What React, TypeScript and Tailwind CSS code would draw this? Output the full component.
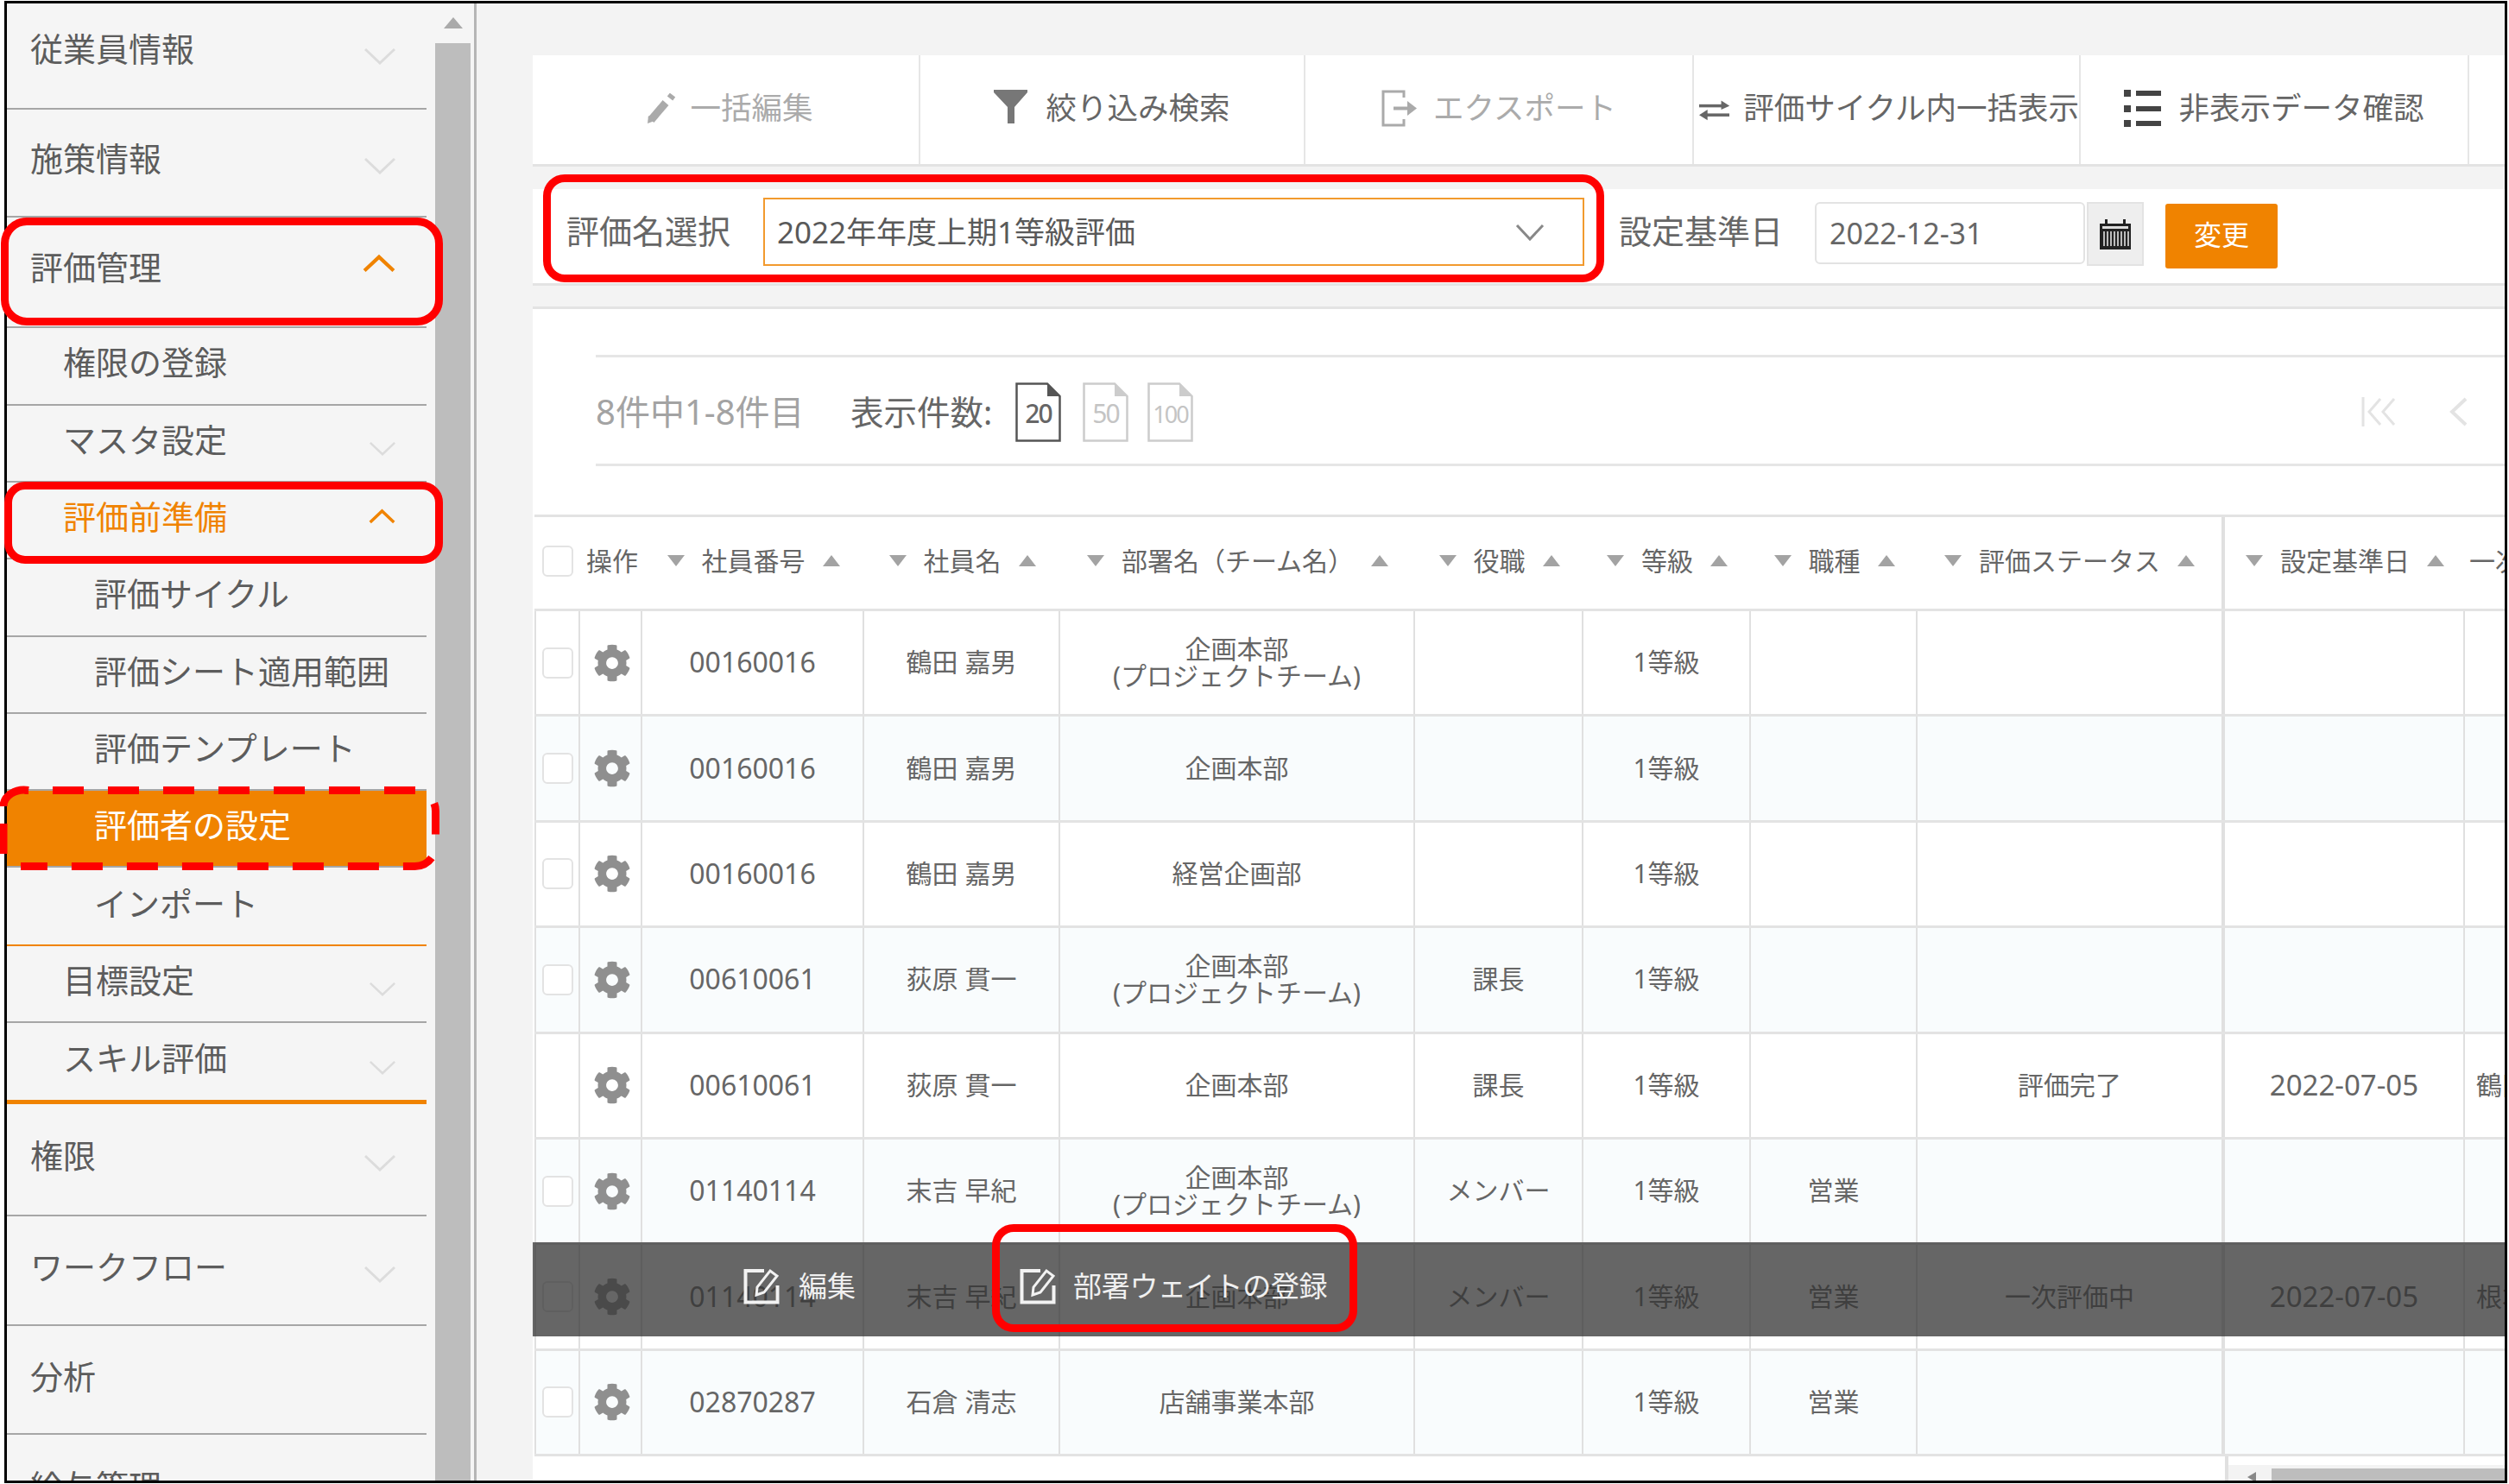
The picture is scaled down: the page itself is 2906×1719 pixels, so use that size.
import { FaCog } from 'react-icons/fa'

type NavItem = {
  label: string
  height: string
  indent: string
  chevron?: 'down' | 'up'
  level: 1 | 2 | 3
  pad?: string
  active?: boolean
  orange?: boolean
  border?: string
}

const navItems: NavItem[] = [
  { label: '従業員情報', height: 'h-[123px]', indent: 'pl-[27px]', chevron: 'down', level: 1, pad: 'pb-[18px]' },
  { label: '施策情報', height: 'h-[125px]', indent: 'pl-[27px]', chevron: 'down', level: 1, pad: 'pb-[12px]' },
  { label: '評価管理', height: 'h-[128px]', indent: 'pl-[27px]', chevron: 'up', level: 1, pad: 'pb-[12px]' },
  { label: '権限の登録', height: 'h-[90px]', indent: 'pl-[65px]', level: 2 },
  { label: 'マスタ設定', height: 'h-[89px]', indent: 'pl-[65px]', chevron: 'down', level: 2 },
  { label: '評価前準備', height: 'h-[89px]', indent: 'pl-[65px]', chevron: 'up', level: 2, orange: true },
  { label: '評価サイクル', height: 'h-[90px]', indent: 'pl-[101px]', level: 3 },
  { label: '評価シート適用範囲', height: 'h-[89px]', indent: 'pl-[101px]', level: 3 },
  { label: '評価テンプレート', height: 'h-[89px]', indent: 'pl-[101px]', level: 3 },
  { label: '評価者の設定', height: 'h-[89px]', indent: 'pl-[101px]', level: 3, active: true },
  { label: 'インポート', height: 'h-[91px]', indent: 'pl-[101px]', level: 3, pad: 'pb-[8px]', border: 'border-b-[2px] border-[#f08300]' },
  { label: '目標設定', height: 'h-[89px]', indent: 'pl-[65px]', chevron: 'down', level: 2 },
  { label: 'スキル評価', height: 'h-[94px]', indent: 'pl-[65px]', chevron: 'down', level: 2, pad: 'pb-[9px]', border: 'border-b-[5px] border-[#f08300]' },
  { label: '権限', height: 'h-[130px]', indent: 'pl-[27px]', chevron: 'down', level: 1 },
  { label: 'ワークフロー', height: 'h-[127px]', indent: 'pl-[27px]', chevron: 'down', level: 1 },
  { label: '分析', height: 'h-[126px]', indent: 'pl-[27px]', level: 1, pad: 'pb-[8px]' },
]

function Chevron({ dir, level }: { dir: 'down' | 'up'; level: number }) {
  if (dir === 'up') {
    return (
      <svg viewBox="0 0 36 20" className={level === 1 ? 'w-[38px] h-[22px] -translate-y-[4px]' : 'w-[31px] h-[18px]'}>
        <polyline points="2,18 18,3 34,18" fill="none" stroke="#f08300" strokeWidth="4" />
      </svg>
    )
  }
  return (
    <svg viewBox="0 0 36 20" className={level === 1 ? 'w-[36px] h-[20px] translate-y-[9px]' : 'w-[30px] h-[17px] translate-y-[11px]'}>
      <polyline points="1,2 18,18 35,2" fill="none" stroke="#dcdcdc" strokeWidth="3" />
    </svg>
  )
}

function Sidebar() {
  return (
    <div className="w-[544px] h-full flex shrink-0 bg-[#f5f5f5] border-r-[3px] border-[#b5b5b5]">
      <div className="w-[486px] h-full overflow-hidden">
        {navItems.map((item) => (
          <div
            key={item.label}
            className={`${item.height} ${item.indent} ${item.pad ?? 'pb-[10px]'} ${item.border ?? 'border-b-[2px] border-[#a6a6a6]'} ${item.active ? 'bg-[#f08300] text-white' : item.orange ? 'text-[#f08300]' : 'text-[#5c5c5c]'} pr-[36px] flex items-center justify-between text-[38px] leading-none`}
          >
            <span className="whitespace-nowrap">{item.label}</span>
            {item.chevron && <Chevron dir={item.chevron} level={item.level} />}
          </div>
        ))}
        <div className="pl-[27px] pt-[40px] text-[38px] leading-none text-[#5c5c5c]">給与管理</div>
      </div>
      <div className="ml-[10px] w-[41px] h-full flex flex-col">
        <div className="h-[46px] flex justify-center pt-[16px]">
          <svg viewBox="0 0 22 13" className="w-[22px] h-[13px]">
            <polygon points="11,0 22,13 0,13" fill="#aaaaaa" />
          </svg>
        </div>
        <div className="flex-1 bg-[#bdbdbd]" />
      </div>
    </div>
  )
}

function ToolButton({ width, muted, gap, children, label, start, shift }: { width: string; muted?: boolean; gap: string; children: React.ReactNode; label: string; start?: boolean; shift?: string }) {
  return (
    <div className={`${width} ${gap} ${start ? 'justify-start pl-[6px]' : 'justify-center'} ${shift ?? ''} h-full shrink-0 flex items-center pb-[4px] border-r-[2px] border-[#e6e6e6] whitespace-nowrap text-[35.5px] leading-none ${muted ? 'text-[#ababab]' : 'text-[#666666]'}`}>
      {children}
      <span>{label}</span>
    </div>
  )
}

function Toolbar() {
  return (
    <div className="h-[129px] shrink-0 flex bg-white border-b-[3px] border-[#e3e3e3]">
      <ToolButton width="w-[449px]" muted gap="gap-[15px]" label="一括編集" shift="pl-[10px]">
        <svg viewBox="0 0 35 35" className="w-[35px] h-[35px]">
          <path d="M5 31 L22 11" stroke="#aaaaaa" strokeWidth="9" fill="none" />
          <path d="M1 35 L2 26 L9 32 Z" fill="#aaaaaa" />
          <path d="M27 6 L30 2" stroke="#aaaaaa" strokeWidth="8" fill="none" />
        </svg>
      </ToolButton>
      <ToolButton width="w-[446px]" gap="gap-[21px]" label="絞り込み検索">
        <svg viewBox="0 0 39 39" className="w-[39px] h-[39px] -translate-y-[2px]">
          <path d="M0 0 H39 V3 L24 20 V39 H16 V20 L0 3 Z" fill="#777777" />
        </svg>
      </ToolButton>
      <ToolButton width="w-[450px]" muted gap="gap-[18px]" label="エクスポート">
        <svg viewBox="0 0 42 43" className="w-[42px] h-[43px]">
          <path d="M26 9 V2 H2 V41 H26 V34" fill="none" stroke="#aaaaaa" strokeWidth="3" />
          <path d="M14 21.5 H32" stroke="#aaaaaa" strokeWidth="4" />
          <path d="M30 13 L41 21.5 L30 30 Z" fill="#aaaaaa" />
        </svg>
      </ToolButton>
      <ToolButton width="w-[448px]" start gap="gap-[16px]" label="評価サイクル内一括表示">
        <svg viewBox="0 0 40 28" className="w-[40px] h-[28px] translate-y-[2px]">
          <path d="M0 9 H32" stroke="#666666" strokeWidth="4" />
          <path d="M29 2 L40 9 L29 14 Z" fill="#666666" />
          <path d="M8 21 H40" stroke="#666666" strokeWidth="4" />
          <path d="M11 14 L0 21 L11 28 Z" fill="#666666" />
        </svg>
      </ToolButton>
      <ToolButton width="w-[450px]" gap="gap-[20px]" label="非表示データ確認">
        <svg viewBox="0 0 43 43" className="w-[43px] h-[43px]">
          <rect x="0" y="0" width="8" height="8" fill="#444444" />
          <rect x="14" y="1" width="29" height="6" fill="#444444" />
          <rect x="0" y="18" width="8" height="8" fill="#444444" />
          <rect x="14" y="19" width="29" height="6" fill="#444444" />
          <rect x="0" y="35" width="8" height="8" fill="#444444" />
          <rect x="14" y="36" width="29" height="6" fill="#444444" />
        </svg>
      </ToolButton>
      <div className="flex-1" />
    </div>
  )
}

function CalendarIcon() {
  return (
    <svg viewBox="0 0 36 35" className="w-[36px] h-[35px]">
      <rect x="0" y="5" width="36" height="30" fill="#222222" />
      <rect x="6" y="0" width="3" height="8" fill="#222222" />
      <rect x="27" y="0" width="3" height="8" fill="#222222" />
      <rect x="3" y="8" width="30" height="3" fill="#dddddd" />
      <path d="M5 14 V31 M9 14 V31 M13 14 V31 M17 14 V31 M21 14 V31 M25 14 V31 M29 14 V31 M33 14 V31" stroke="#eeeeee" strokeWidth="1.5" />
    </svg>
  )
}

function FilterBar() {
  return (
    <div className="mt-[26px] h-[112px] shrink-0 bg-white border-b-[3px] border-[#e3e3e3] pl-[39px] pt-[10px] flex items-start">
      <div className="h-[79px] pb-[3px] flex items-center text-[38px] leading-none text-[#666666] w-[228px]">評価名選択</div>
      <div className="w-[951px] h-[79px] border-[2px] border-[#f29a2e] pl-[14px] pr-[44px] flex items-center justify-between text-[35px] leading-none text-[#595959]">
        <span>2022年年度上期1等級評価</span>
        <svg viewBox="0 0 34 20" className="w-[34px] h-[20px]">
          <polyline points="2,2 17,18 32,2" fill="none" stroke="#888888" strokeWidth="3" />
        </svg>
      </div>
      <div className="ml-[40px] h-[79px] pb-[3px] flex items-center text-[38px] leading-none text-[#666666] w-[227px]">設定基準日</div>
      <div className="mt-[5px] w-[313px] h-[72px] border-[2px] border-[#e3e3e3] rounded-[6px] pl-[15px] flex items-center text-[34px] leading-none text-[#666666]">2022-12-31</div>
      <div className="mt-[5px] ml-[2px] w-[66px] h-[74px] bg-[#eeeeee] border-[2px] border-[#e3e3e3] flex items-center justify-center">
        <CalendarIcon />
      </div>
      <div className="mt-[7px] ml-[25px] w-[130px] h-[75px] pb-[4px] bg-[#f08300] rounded-[3px] flex items-center justify-center text-[32px] leading-none text-white">変更</div>
    </div>
  )
}

function PageSize({ value, on, text }: { value: string; on?: boolean; text: string }) {
  const color = on ? '#555555' : '#cccccc'
  return (
    <div className={`relative w-[53px] h-[69px] flex items-center justify-center pt-[4px] ${text} leading-none ${on ? 'text-[#666666] font-medium' : 'text-[#c4c4c4]'}`}>
      <svg viewBox="0 0 53 69" className="absolute inset-0 w-[53px] h-[69px]">
        <path d="M1.5 1.5 H37 L51.5 16 V67.5 H1.5 Z" fill="white" stroke={color} strokeWidth="2.5" />
        <path d="M37 1.5 V16 H51.5" fill={color} />
      </svg>
      <span className="relative tracking-[-2px]">{value}</span>
    </div>
  )
}

function Pager() {
  return (
    <div className="mt-[53px] ml-[73px] h-[129px] shrink-0 border-y-[3px] border-[#e6e6e6] flex items-center pt-[3px]">
      <span className="text-[40px] leading-none text-[#a3a3a3] w-[295px] whitespace-nowrap">8件中1-8件目</span>
      <span className="text-[38.5px] leading-none text-[#666666] w-[191px] whitespace-nowrap">表示件数:</span>
      <PageSize value="20" on text="text-[30px]" />
      <div className="w-[25px]" />
      <PageSize value="50" text="text-[30px]" />
      <div className="w-[22px]" />
      <PageSize value="100" text="text-[27px]" />
      <div className="ml-auto flex items-center gap-[60px] pr-[43px]">
        <svg viewBox="0 0 42 34" className="w-[42px] h-[34px]">
          <path d="M2 0 V34" stroke="#e3e3e3" strokeWidth="3" />
          <polyline points="22,2 9,17 22,32" fill="none" stroke="#e3e3e3" strokeWidth="3" />
          <polyline points="38,2 25,17 38,32" fill="none" stroke="#e3e3e3" strokeWidth="3" />
        </svg>
        <svg viewBox="0 0 21 34" className="w-[21px] h-[34px]">
          <polyline points="19,2 3,17 19,32" fill="none" stroke="#e3e3e3" strokeWidth="4" />
        </svg>
      </div>
    </div>
  )
}

const gridCols = 'grid grid-cols-[53px_72px_257px_227px_411px_195px_194px_193px_356px_278px_46px]'

function SortHead({ label, className = '' }: { label: string; className?: string }) {
  return (
    <div className={`flex items-center justify-center gap-[20px] ${className}`}>
      <svg viewBox="0 0 20 13" className="w-[20px] h-[13px] shrink-0">
        <polygon points="0,0 20,0 10,13" fill="#a3a3a3" />
      </svg>
      <span className="whitespace-nowrap">{label}</span>
      <svg viewBox="0 0 20 13" className="w-[20px] h-[13px] shrink-0">
        <polygon points="10,0 20,13 0,13" fill="#a3a3a3" />
      </svg>
    </div>
  )
}

function Checkbox({ className = '' }: { className?: string }) {
  return <div className={`w-[36px] h-[36px] bg-white border-[2px] border-[#e3e3e3] rounded-[6px] ${className}`} />
}

function TableHead() {
  return (
    <div className={`${gridCols} h-[112px] border-y-[3px] border-[#e3e3e3] text-[30px] leading-none text-[#666666] pb-[5px]`}>
      <div className="flex items-center pl-[9px]">
        <Checkbox />
      </div>
      <div className="flex items-center pl-[7px]">操作</div>
      <SortHead label="社員番号" />
      <SortHead label="社員名" />
      <SortHead label="部署名（チーム名）" />
      <SortHead label="役職" />
      <SortHead label="等級" />
      <SortHead label="職種" />
      <SortHead label="評価ステータス" className="border-r-[4px] border-[#e0e0e0] -mb-[5px] pb-[5px]" />
      <SortHead label="設定基準日" />
      <div className="flex items-center pl-[5px] whitespace-nowrap overflow-hidden">一次評価者</div>
    </div>
  )
}

type Row = {
  no: string
  name: string
  dept: string[]
  role?: string
  job?: string
  status?: string
  date?: string
  rater?: string
  noCheck?: boolean
  overlay?: boolean
}

const planning = ['企画本部', '(プロジェクトチーム)']

const rows: Row[] = [
  { no: '00160016', name: '鶴田 嘉男', dept: planning },
  { no: '00160016', name: '鶴田 嘉男', dept: ['企画本部'] },
  { no: '00160016', name: '鶴田 嘉男', dept: ['経営企画部'] },
  { no: '00610061', name: '荻原 貫一', dept: planning, role: '課長' },
  { no: '00610061', name: '荻原 貫一', dept: ['企画本部'], role: '課長', status: '評価完了', date: '2022-07-05', rater: '鶴田', noCheck: true },
  { no: '01140114', name: '末吉 早紀', dept: planning, role: 'メンバー', job: '営業' },
  { no: '01140114', name: '末吉 早紀', dept: ['企画本部'], role: 'メンバー', job: '営業', status: '一次評価中', date: '2022-07-05', rater: '根本', overlay: true },
  { no: '02870287', name: '石倉 清志', dept: ['店舗事業本部'], job: '営業' },
]

function EditIcon() {
  return (
    <svg viewBox="0 0 42 42" className="w-[42px] h-[42px]">
      <path d="M24 3 H2.5 V39.5 H39.5 V20" fill="none" stroke="#f2f2f2" strokeWidth="4" />
      <path d="M15 31 L16 22 L31 3 L39 9 L24 28 Z" fill="none" stroke="#f2f2f2" strokeWidth="3" />
    </svg>
  )
}

function RowOverlay() {
  return (
    <div className="absolute -top-[3px] -left-[2px] right-0 h-[109px] bg-[#333333]/75 flex items-center pb-[8px] pl-[244px] text-[33px] leading-none text-[#f0f0f0]">
      <EditIcon />
      <span className="ml-[22px]">編集</span>
      <div className="ml-[190px]">
        <EditIcon />
      </div>
      <span className="ml-[20px] whitespace-nowrap tracking-[-0.3px]">部署ウェイトの登録</span>
    </div>
  )
}

function TableRow({ row, alt }: { row: Row; alt: boolean }) {
  const cell = 'border-r-[2px] border-[#e0e0e0] flex items-center justify-center'
  return (
    <div className={`${gridCols} relative h-[122.4px] border-b-[3px] border-[#e3e3e3] text-[30px] leading-[31px] text-[#666666] ${alt ? 'bg-[#f9fcfd]' : 'bg-white'}`}>
      <div className={`${cell} border-l-[2px]`}>{!row.noCheck && <Checkbox />}</div>
      <div className={`${cell} pl-[3px]`}>
        <FaCog className="w-[44px] h-[44px] text-[#8f8f8f]" />
      </div>
      <div className={`${cell} text-[32px] pb-[2px]`}>{row.no}</div>
      <div className={`${cell} whitespace-nowrap pb-[2px]`}>{row.name}</div>
      <div className={`${cell} flex-col whitespace-nowrap pb-[2px]`}>
        {row.dept.map((line) => (
          <span key={line}>{line}</span>
        ))}
      </div>
      <div className={`${cell} pb-[2px]`}>{row.role}</div>
      <div className={`${cell} pb-[2px]`}>1等級</div>
      <div className={`${cell} pb-[2px]`}>{row.job}</div>
      <div className={`${cell} border-r-[4px] pb-[2px]`}>{row.status}</div>
      <div className={`${cell} text-[33px] pb-[2px]`}>{row.date}</div>
      <div className="flex items-center pl-[13px] whitespace-nowrap overflow-hidden pb-[2px]">{row.rater}</div>
      {row.overlay && <RowOverlay />}
    </div>
  )
}

function Annotations() {
  return (
    <>
      <div className="absolute left-[1px] top-[252px] w-[512px] h-[125px] border-[9px] border-[#ff0000] rounded-[30px]" />
      <div className="absolute left-[5px] top-[558px] w-[508px] h-[95px] border-[9px] border-[#ff0000] rounded-[24px]" />
      <svg viewBox="0 0 520 110" className="absolute left-0 top-[905px] w-[520px] h-[110px]">
        <path d="M28.5 10.5 H480.5 A24 24 0 0 1 504.5 34.5 V74.5 A24 24 0 0 1 480.5 98.5 H24" fill="none" stroke="#ff0000" strokeWidth="9" strokeDasharray="36 28" strokeDashoffset="31.5" />
        <path d="M4 49 V84" fill="none" stroke="#ff0000" strokeWidth="9" />
        <path d="M4 29 A24 19 0 0 1 33 10.5" fill="none" stroke="#ff0000" strokeWidth="9" />
      </svg>
      <div className="absolute left-[629px] top-[202px] w-[1229px] h-[125px] border-[9px] border-[#ff0000] rounded-[25px]" />
      <div className="absolute left-[1149px] top-[1418px] w-[423px] h-[125px] border-[9px] border-[#ff0000] rounded-[25px]" />
    </>
  )
}

export default function App() {
  return (
    <div className="relative w-[2906px] h-[1719px] overflow-hidden bg-white pl-[5px] pt-[1px] pr-[2px] pb-[1px] font-['Noto_Sans','Noto_Sans_CJK_JP',sans-serif]">
      <div className="h-full flex overflow-hidden border-[3px] border-black">
        <Sidebar />
        <main className="flex-1 min-w-0 h-full flex flex-col bg-[#f3f3f3] pt-[60px] pl-[65px]">
          <Toolbar />
          <FilterBar />
          <section className="mt-[24px] flex-1 min-h-0 flex flex-col bg-white border-t-[3px] border-[#e3e3e3] overflow-hidden">
            <Pager />
            <div className="mt-[56px] ml-[2px]">
              <TableHead />
              {rows.map((row, i) => (
                <TableRow key={i} row={row} alt={i % 2 === 1} />
              ))}
              <div className="ml-[1958px] h-[40px] border-l-[4px] border-[#e0e0e0] pt-[10px]">
                <div className="h-[24px] bg-[#f3f3f3] flex items-stretch pl-[50px] relative">
                  <svg viewBox="0 0 10 12" className="absolute left-[22px] top-[8px] w-[10px] h-[12px]">
                    <polygon points="10,0 10,12 0,6" fill="#888888" />
                  </svg>
                  <div className="flex-1 bg-[#bdbdbd] mt-[4px]" />
                </div>
              </div>
            </div>
          </section>
        </main>
      </div>
      <Annotations />
    </div>
  )
}
